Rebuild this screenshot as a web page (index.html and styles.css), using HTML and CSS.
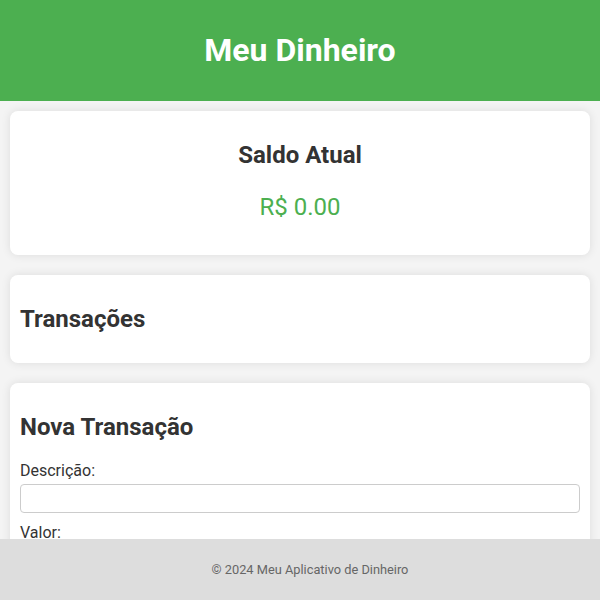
FILE: index.html
```html
<!DOCTYPE html>
<html lang="pt-BR">
<head>
<meta charset="utf-8">
<title>Meu Dinheiro</title>
<link rel="stylesheet" href="styles.css">
</head>
<body>
<header class="topbar">
  <h1 class="title">Meu Dinheiro</h1>
</header>
<main class="container">
  <section class="card balance">
    <h2 class="card-title">Saldo Atual</h2>
    <p class="amount">R$ 0.00</p>
  </section>
  <section class="card">
    <h2 class="card-title">Transações</h2>
    <ul class="list"></ul>
  </section>
  <section class="card">
    <h2 class="card-title">Nova Transação</h2>
    <form class="form">
      <label class="label" for="desc">Descrição:</label>
      <input class="field" id="desc" type="text">
      <label class="label" for="valor">Valor:</label>
      <input class="field" id="valor" type="number">
      <label class="label" for="tipo">Tipo:</label>
      <select class="field" id="tipo"><option>Receita</option><option>Despesa</option></select>
      <button class="btn" type="button">Adicionar</button>
    </form>
  </section>
</main>
<footer class="footer">
  <p class="copy">© 2024 Meu Aplicativo de Dinheiro</p>
</footer>
</body>
</html>
```

FILE: styles.css
```css
html, body {
  margin: 0;
  padding: 0;
}
body {
  font-family: Roboto, "Liberation Sans", Arial, sans-serif;
  background: #f4f4f4;
  color: #333;
  overflow-x: hidden;
}
.topbar {
  background: #4caf50;
  color: #fff;
  text-align: center;
  padding: 10px;
}
.title {
  font-size: 32px;
  font-weight: 700;
  margin: 21.44px 0;
}
.container {
  padding: 10px;
  padding-bottom: 80px;
}
.card {
  background: #fff;
  border-radius: 8px;
  box-shadow: 0 0 10px rgba(0, 0, 0, 0.1);
  padding: 10px;
  margin-bottom: 20px;
}
.balance {
  text-align: center;
}
.card-title {
  font-size: 24px;
  font-weight: 700;
  margin: 20px 0;
}
.amount {
  font-size: 24px;
  color: #4caf50;
  margin: 24px 0;
}
.list {
  list-style: none;
  padding: 0;
  margin: 0;
}
.form {
  display: flex;
  flex-direction: column;
}
.label {
  display: block;
  font-size: 16px;
  margin-bottom: 4px;
}
.field {
  box-sizing: border-box;
  width: 100%;
  padding: 6px;
  border: 1px solid #ccc;
  border-radius: 4px;
  margin-bottom: 10px;
  font-size: 13.33px;
  font-family: Roboto, "Liberation Sans", Arial, sans-serif;
  background: #fff;
}
.btn {
  background: #4caf50;
  color: #fff;
  border: none;
  padding: 10px;
  border-radius: 4px;
  font-size: 16px;
}
.footer {
  position: fixed;
  left: 0;
  bottom: 0;
  width: 100%;
  background: #ddd;
  text-align: center;
  padding: 10px;
}
.copy {
  font-size: 12.8px;
  color: #666;
  margin: 12.8px 0;
}
```
